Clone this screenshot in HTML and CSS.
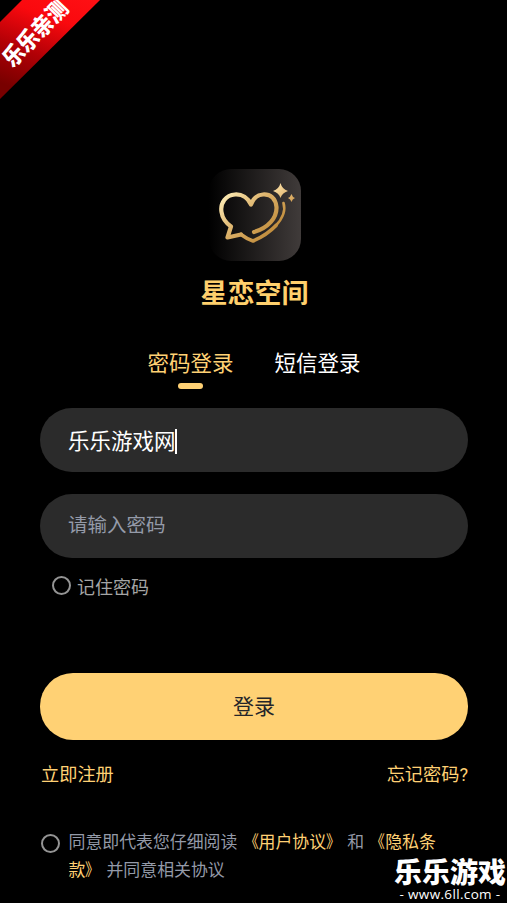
FILE: index.html
```html
<!DOCTYPE html>
<html lang="zh-CN">
<head>
<meta charset="utf-8">
<title>星恋空间</title>
<link rel="stylesheet" href="styles.css">
</head>
<body>
<main class="screen">
  <div class="ribbon"><span class="ribbon-text">乐乐亲测</span></div>
  <header class="brand">
    <svg class="logo" viewBox="0 0 92 92">
      <defs>
        <linearGradient id="tile"><stop offset="0" stop-color="#000"/><stop offset="1" stop-color="#403b3a"/></linearGradient>
        <linearGradient id="gold" gradientUnits="userSpaceOnUse" x1="14" y1="22" x2="65" y2="75"><stop offset="0" stop-color="#fff0bb"/><stop offset=".5" stop-color="#d9ad64"/><stop offset="1" stop-color="#b9822f"/></linearGradient>
        <linearGradient id="spark" x2="1" y2="1"><stop offset="0" stop-color="#ffe8b2"/><stop offset="1" stop-color="#d29d50"/></linearGradient>
      </defs>
      <rect width="92" height="92" rx="22" fill="url(#tile)"/>
      <g fill="none" stroke="url(#gold)" stroke-linecap="round" stroke-linejoin="round">
        <path stroke-width="4.200" d="M45 63C59 59 68 49 67.500 38C66.500 29 61 25 54 25.500C47 26 44 30 42 35.500C39 29 33 25 26 25.500C17 26 11 34 12.500 43C13.500 50 17 54 22 57.500L18.500 68.500L32 65.500"/>
        <path stroke-width="3.600" d="M32 65.500Q38 70 44 72Q58 66 67 56.500"/>
        <path stroke-width="2.600" d="M66.500 57Q78 45 74.500 34"/>
      </g>
      <path fill="url(#spark)" d="M71.500 14Q73 20 79 22Q73 24 71.500 29Q70 24 64 22Q70 20 71.500 14ZM82.500 25Q83.300 28 86 29Q83.300 30 82.500 33Q81.500 30 79 29Q81.500 28 82.500 25Z"/>
    </svg>
    <h1 class="brand-name">星恋空间</h1>
  </header>
  <nav class="tabs">
    <span class="tab tab-active">密码登录</span>
    <span class="tab">短信登录</span>
  </nav>
  <div class="field field-filled">乐乐游戏网<i class="caret"></i></div>
  <div class="field field-empty">请输入密码</div>
  <div class="remember"><i class="radio"></i><span>记住密码</span></div>
  <div class="submit">登录</div>
  <div class="links"><span>立即注册</span><span>忘记密码?</span></div>
  <div class="agreement">
    <i class="radio"></i>
    <p class="terms">同意即代表您仔细阅读 <b><i class="open">《</i>用户协议<i class="close">》</i></b> 和 <b><i class="open">《</i>隐私条<br>款<i class="close">》</i></b> 并同意相关协议</p>
  </div>
  <div class="watermark">
    <strong class="mark-name">乐乐游戏</strong>
    <span class="mark-url">- www.6ll.com -</span>
  </div>
</main>
</body>
</html>
```
FILE: styles.css
```css
* { box-sizing: border-box; }
body {
  margin: 0;
  background: #000;
  color: #fff;
  font-family: Roboto, "Noto Sans CJK SC", sans-serif;
}
.screen {
  position: relative;
  width: 507px;
  height: 903px;
  padding: 169px 39px 0 40px;
  overflow: hidden;
}
.ribbon {
  position: absolute;
  left: 0;
  top: 0;
  width: 100px;
  height: 99px;
  background: linear-gradient(20deg, #780000 0 12%, #b00006 42%, #fa090e 74%, #ff1014);
  clip-path: polygon(22px 0, 100% 0, 0 100%, 0 22px);
}
.ribbon-text {
  position: absolute;
  left: -10px;
  top: 20px;
  width: 88px;
  text-align: center;
  font: 900 20.500px/24px "Noto Sans CJK SC", sans-serif;
  white-space: nowrap;
  transform: rotate(-46deg) scaleY(1.12);
}
.brand {
  display: flex;
  flex-direction: column;
  align-items: center;
}
.logo {
  display: block;
  width: 92px;
  height: 92px;
  margin-left: 2px;
}
.brand-name {
  margin: 11px 0 0 1px;
  font: 700 27px/40px "Noto Sans CJK SC", sans-serif;
  color: #ffd06d;
}
.tabs {
  display: flex;
  justify-content: center;
  gap: 41px;
  height: 60px;
  margin-top: 36px;
}
.tab {
  display: flex;
  flex-direction: column;
  align-items: center;
  font-size: 21.500px;
  line-height: 32px;
}
.tab-active { color: #ffd174; }
.tab-active::after {
  content: "";
  width: 25px;
  height: 6px;
  margin-top: 3px;
  border-radius: 3px;
  background: #ffd174;
}
.field {
  display: flex;
  align-items: center;
  height: 64px;
  padding-left: 28px;
  border-radius: 32px;
  background: #2b2b2b;
}
.field-filled {
  padding-bottom: 2px;
  font-size: 21.500px;
}
.field-empty {
  margin-top: 22px;
  padding-bottom: 5px;
  font-size: 19.500px;
  color: #949aa8;
}
.caret {
  width: 2px;
  height: 25px;
  margin: 4px 0 0 -1px;
  background: #fff;
}
.radio {
  flex: none;
  width: 19px;
  height: 19px;
  border: 2px solid #949494;
  border-radius: 50%;
}
.remember {
  display: flex;
  align-items: center;
  gap: 6px;
  height: 28px;
  margin-top: 14px;
  padding-left: 12px;
  font-size: 18px;
  color: #a5a5a5;
}
.remember .radio { margin-top: -1px; }
.submit {
  height: 67px;
  margin-top: 73px;
  border-radius: 33px;
  background: #ffd174;
  color: #242529;
  font-size: 21px;
  line-height: 68px;
  text-align: center;
}
.links {
  display: flex;
  justify-content: space-between;
  margin-top: 21px;
  padding-left: 1px;
  font-size: 18.200px;
  line-height: 28px;
  color: #ffd174;
}
.agreement {
  display: flex;
  gap: 9px;
  margin-top: 39px;
}
.agreement .radio { margin: 6px 0 0 1px; }
.terms {
  margin: 0 0 0 -.5px;
  font-size: 16.900px;
  line-height: 28px;
  white-space: nowrap;
  color: #949aa8;
}
.terms b {
  font-weight: 400;
  color: #ffd174;
}
.open,
.close {
  display: inline-block;
  font-style: normal;
  transform: scaleX(.85);
}
.open { transform-origin: right; }
.close { transform-origin: left; }
.watermark {
  position: absolute;
  right: 1px;
  bottom: 1px;
  display: flex;
  flex-direction: column;
  align-items: center;
  width: 112px;
}
.mark-name {
  font: 900 28px/30px "Noto Sans CJK SC", sans-serif;
  white-space: nowrap;
}
.mark-url {
  font: 13.500px/16px "Open Sans", sans-serif;
  letter-spacing: .35px;
  white-space: nowrap;
}
```
